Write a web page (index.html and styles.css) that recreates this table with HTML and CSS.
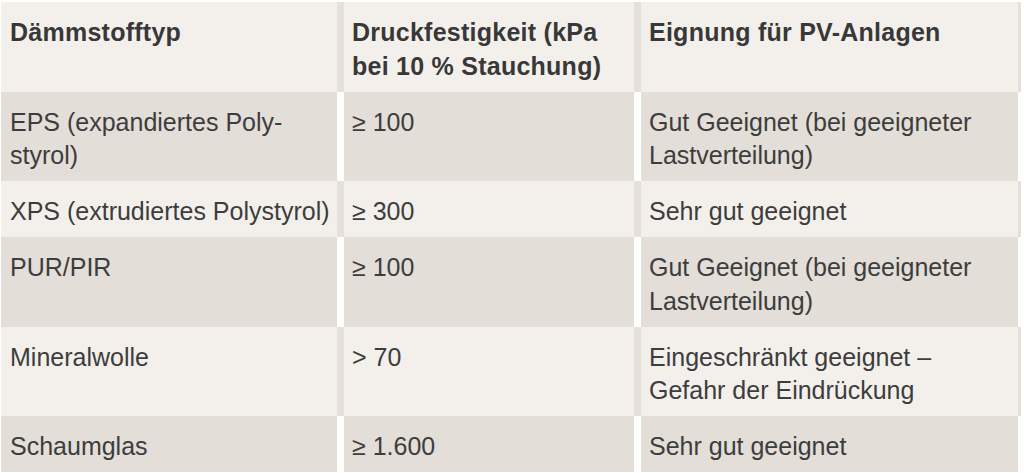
FILE: index.html
```html
<!DOCTYPE html>
<html lang="de">
<head>
<meta charset="utf-8">
<title>Dämmstoffe für PV-Anlagen</title>
<link rel="stylesheet" href="styles.css">
</head>
<body>
<div class="table" role="table">
  <div class="row light head" role="row">
    <div class="cell" role="columnheader">Dämmstofftyp</div>
    <div class="cell" role="columnheader">Druckfestigkeit (kPa<br>bei 10 % Stauchung)</div>
    <div class="cell" role="columnheader">Eignung für PV-Anlagen</div>
  </div>
  <div class="row dark" role="row">
    <div class="cell" role="cell">EPS (expandiertes Poly-<br>styrol)</div>
    <div class="cell" role="cell">≥ 100</div>
    <div class="cell" role="cell">Gut Geeignet (bei geeigneter<br>Lastverteilung)</div>
  </div>
  <div class="row light" role="row">
    <div class="cell" role="cell">XPS (extrudiertes Polystyrol)</div>
    <div class="cell" role="cell">≥ 300</div>
    <div class="cell" role="cell">Sehr gut geeignet</div>
  </div>
  <div class="row dark" role="row">
    <div class="cell" role="cell">PUR/PIR</div>
    <div class="cell" role="cell">≥ 100</div>
    <div class="cell" role="cell">Gut Geeignet (bei geeigneter<br>Lastverteilung)</div>
  </div>
  <div class="row light" role="row">
    <div class="cell" role="cell">Mineralwolle</div>
    <div class="cell" role="cell">&gt; 70</div>
    <div class="cell" role="cell">Eingeschränkt geeignet –<br>Gefahr der Eindrückung</div>
  </div>
  <div class="row dark" role="row">
    <div class="cell" role="cell">Schaumglas</div>
    <div class="cell" role="cell">≥ 1.600</div>
    <div class="cell" role="cell">Sehr gut geeignet</div>
  </div>
</div>
</body>
</html>
```
FILE: styles.css
```css
html, body {
  margin: 0;
  padding: 0;
  background: #ffffff;
}

body {
  font-family: "Liberation Sans", Arial, sans-serif;
  font-size: 25px;
  line-height: 33.5px;
  color: #3d3d3d;
}

.table {
  display: flex;
  flex-direction: column;
  padding: 2px 0 0 1px;
  width: 1020px;
}

.row {
  display: grid;
  grid-template-columns: 336px 290px 377px;
  column-gap: 7px;
  padding-right: 3px;
}

.row.light {
  background: #e5e0da;
}

.row.light .cell {
  background: #f3f0ec;
}

.row.dark {
  background: #ffffff;
}

.row.dark .cell {
  background: #e3ded8;
}

.cell {
  padding: 14px 4px 8.5px 9px;
  white-space: nowrap;
}

.cell + .cell {
  padding-left: 8px;
}

.head .cell {
  font-weight: bold;
  color: #383838;
  letter-spacing: 0.25px;
}
```
